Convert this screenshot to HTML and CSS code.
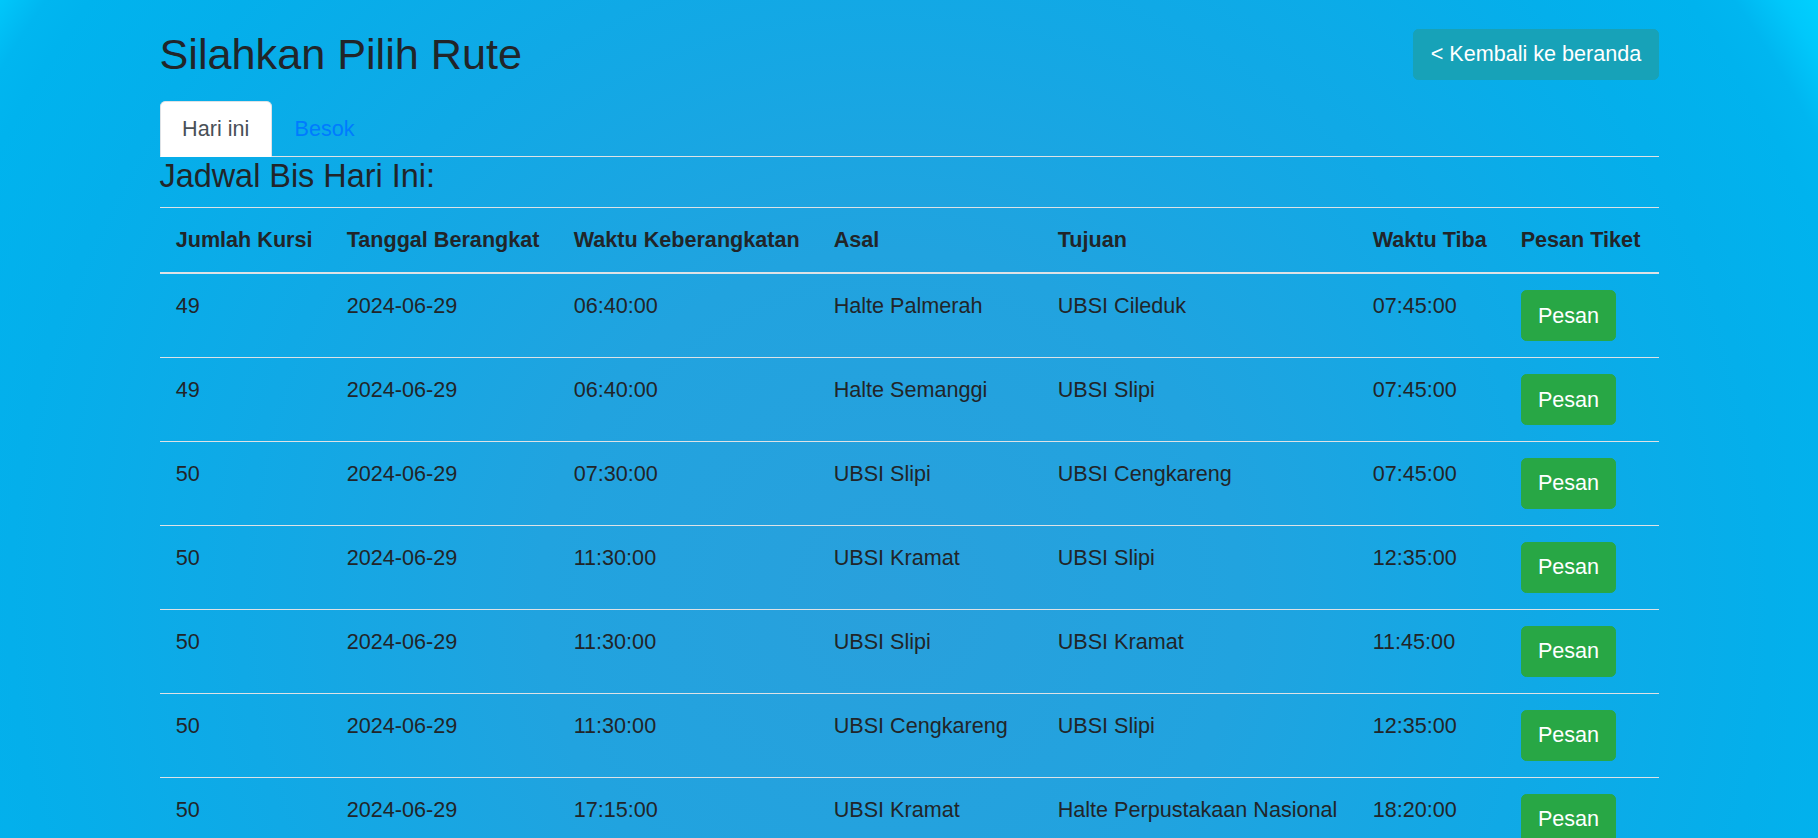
FILE: index.html
```html
<!DOCTYPE html>
<html lang="id">
<head>
<meta charset="utf-8">
<title>Pilih Rute</title>
<link rel="stylesheet" href="styles.css">
</head>
<body>
<div class="page">
  <div class="topbar">
    <h2 class="title">Silahkan Pilih Rute</h2>
    <a class="btn btn-back" href="#">&lt; Kembali ke beranda</a>
  </div>
  <ul class="tabs">
    <li><a class="tab active" href="#">Hari ini</a></li>
    <li><a class="tab" href="#">Besok</a></li>
  </ul>
  <h4 class="subtitle">Jadwal Bis Hari Ini:</h4>
  <table class="schedule">
    <colgroup>
      <col class="c1"><col class="c2"><col class="c3"><col class="c4"><col class="c5"><col class="c6"><col class="c7">
    </colgroup>
    <thead>
      <tr>
        <th>Jumlah Kursi</th>
        <th>Tanggal Berangkat</th>
        <th>Waktu Keberangkatan</th>
        <th>Asal</th>
        <th>Tujuan</th>
        <th>Waktu Tiba</th>
        <th>Pesan Tiket</th>
      </tr>
    </thead>
    <tbody>
      <tr><td>49</td><td>2024-06-29</td><td>06:40:00</td><td>Halte Palmerah</td><td>UBSI Cileduk</td><td>07:45:00</td><td><a class="btn btn-order" href="#">Pesan</a></td></tr>
      <tr><td>49</td><td>2024-06-29</td><td>06:40:00</td><td>Halte Semanggi</td><td>UBSI Slipi</td><td>07:45:00</td><td><a class="btn btn-order" href="#">Pesan</a></td></tr>
      <tr><td>50</td><td>2024-06-29</td><td>07:30:00</td><td>UBSI Slipi</td><td>UBSI Cengkareng</td><td>07:45:00</td><td><a class="btn btn-order" href="#">Pesan</a></td></tr>
      <tr><td>50</td><td>2024-06-29</td><td>11:30:00</td><td>UBSI Kramat</td><td>UBSI Slipi</td><td>12:35:00</td><td><a class="btn btn-order" href="#">Pesan</a></td></tr>
      <tr><td>50</td><td>2024-06-29</td><td>11:30:00</td><td>UBSI Slipi</td><td>UBSI Kramat</td><td>11:45:00</td><td><a class="btn btn-order" href="#">Pesan</a></td></tr>
      <tr><td>50</td><td>2024-06-29</td><td>11:30:00</td><td>UBSI Cengkareng</td><td>UBSI Slipi</td><td>12:35:00</td><td><a class="btn btn-order" href="#">Pesan</a></td></tr>
      <tr><td>50</td><td>2024-06-29</td><td>17:15:00</td><td>UBSI Kramat</td><td>Halte Perpustakaan Nasional</td><td>18:20:00</td><td><a class="btn btn-order" href="#">Pesan</a></td></tr>
    </tbody>
  </table>
</div>
</body>
</html>
```
FILE: styles.css
```css
html, body {
  margin: 0;
  padding: 0;
}

body {
  min-height: 100vh;
  font-family: "Liberation Sans", Arial, sans-serif;
  font-size: 21.6px;
  line-height: 1.5;
  color: #212529;
  background: radial-gradient(circle 1110px at 890px 600px,
    #29a0dc 0px,
    #21a3df 350px,
    #10a9e6 650px,
    #04afeb 880px,
    #00b3ee 1000px,
    #00b6f0 1035px,
    #00c8fb 1075px,
    #00d2ff 1110px);
  background-color: #00d2ff;
}

.page {
  width: 1499px;
  margin: 0 auto;
  padding-top: 29px;
}

.topbar {
  display: flex;
  justify-content: space-between;
  align-items: flex-start;
  margin-bottom: 20px;
}

.title {
  margin: 0;
  font-size: 43.2px;
  font-weight: 400;
  line-height: 1.2;
}

.btn {
  display: inline-block;
  font-size: 21.6px;
  line-height: 32.4px;
  padding: 8.1px 16.2px;
  border: 1px solid transparent;
  border-radius: 5.4px;
  color: #fff;
  text-decoration: none;
  white-space: nowrap;
}

.btn-back {
  background: #17a2b8;
  border-color: #17a2b8;
}

.btn-order {
  background: #28a745;
  border-color: #28a745;
}

.tabs {
  display: flex;
  list-style: none;
  margin: 0;
  padding: 0;
  border-bottom: 1px solid #dee2e6;
}

.tab {
  display: block;
  padding: 10.8px 21.6px;
  border: 1px solid transparent;
  border-top-left-radius: 5.4px;
  border-top-right-radius: 5.4px;
  margin-bottom: -1px;
  color: #007bff;
  text-decoration: none;
}

.tab.active {
  color: #495057;
  background: #fff;
  border-color: #dee2e6 #dee2e6 #fff;
}

.subtitle {
  margin: 0 0 10.8px;
  font-size: 32.4px;
  font-weight: 400;
  line-height: 1.2;
}

.schedule {
  width: 100%;
  table-layout: fixed;
  border-collapse: collapse;
}

.c1 { width: 171px; }
.c2 { width: 227px; }
.c3 { width: 260px; }
.c4 { width: 224px; }
.c5 { width: 315px; }
.c6 { width: 148px; }
.c7 { width: 154px; }

.schedule th,
.schedule td {
  padding: 16.2px;
  text-align: left;
  vertical-align: top;
  border-top: 1px solid #dee2e6;
  white-space: nowrap;
}

.schedule thead th {
  vertical-align: bottom;
  font-weight: 700;
  border-bottom: 2px solid #dee2e6;
}
```
